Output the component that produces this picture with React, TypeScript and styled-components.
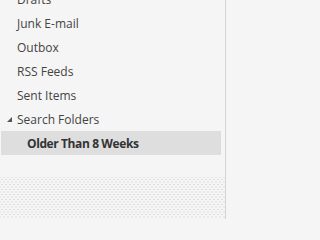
import styled, { createGlobalStyle } from 'styled-components'

const GlobalStyle = createGlobalStyle`
  html, body {
    margin: 0;
    padding: 0;
    background: #f5f5f5;
    overflow: hidden;
  }
`

const Pane = styled.div`
  width: 226px;
  height: 219px;
  box-sizing: border-box;
  border-right: 1px solid #d4d4d4;
  background: #f5f5f5;
  display: flex;
  flex-direction: column;
  overflow: hidden;
  font-family: 'Open Sans', 'Noto Sans', sans-serif;
  font-size: 12px;
  color: #444444;
`

const List = styled.div`
  display: flex;
  flex-direction: column;
  margin-top: -13px;
`

const Row = styled.div<{ $indent: number; $selected?: boolean }>`
  height: 24px;
  display: flex;
  align-items: center;
  gap: 5px;
  padding-left: ${(p) => p.$indent}px;
  margin: 0 4px 0 1px;
  background: ${(p) => (p.$selected ? '#dedede' : 'transparent')};
  font-weight: ${(p) => (p.$selected ? 700 : 400)};
  letter-spacing: ${(p) => (p.$selected ? '-0.4px' : '0')};
  color: ${(p) => (p.$selected ? '#333333' : '#444444')};
  white-space: nowrap;
`

const Spacer = styled.div`
  height: 22px;
`

const Dotted = styled.div`
  flex: 1;
  background-color: #f5f5f5;
  background-image: radial-gradient(circle, #dddddd 0.55px, transparent 0.8px),
    radial-gradient(circle, #dddddd 0.55px, transparent 0.8px);
  background-size: 4px 5px;
  background-position: 0 0, 2px 2.5px;
`

function Caret() {
  return (
    <svg width="5" height="5" viewBox="0 0 5 5">
      <polygon points="5,0 5,5 0,5" fill="#555" />
    </svg>
  )
}

const folders = ['Drafts', 'Junk E-mail', 'Outbox', 'RSS Feeds', 'Sent Items']

export default function App() {
  return (
    <>
      <GlobalStyle />
      <Pane>
        <List>
          {folders.map((f) => (
            <Row key={f} $indent={16}>
              {f}
            </Row>
          ))}
          <Row $indent={6}>
            <Caret />
            Search Folders
          </Row>
          <Row $indent={26} $selected>
            Older Than 8 Weeks
          </Row>
        </List>
        <Spacer />
        <Dotted />
      </Pane>
    </>
  )
}
